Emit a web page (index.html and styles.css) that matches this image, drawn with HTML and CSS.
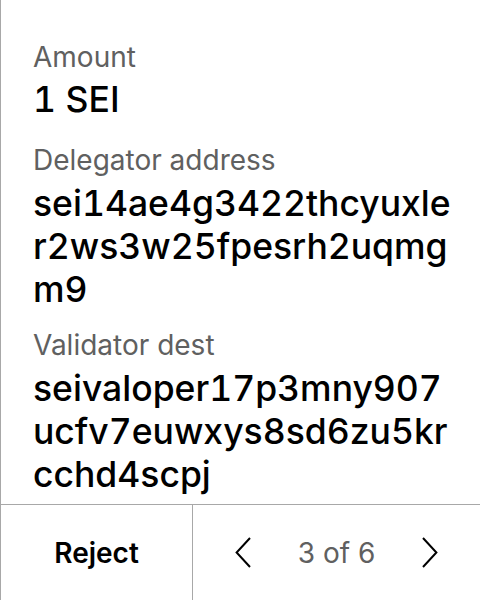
FILE: index.html
```html
<!DOCTYPE html>
<html lang="en">
<head>
<meta charset="utf-8">
<title>Review transaction</title>
<link rel="stylesheet" href="styles.css">
</head>
<body>
<div class="screen">
  <main class="content">
    <section class="field field-amount">
      <div class="label">Amount</div>
      <div class="value">1 SEI</div>
    </section>
    <section class="field field-delegator">
      <div class="label">Delegator address</div>
      <div class="value">sei14ae4g3422thcyuxle<br>r2ws3w25fpesrh2uqmg<br>m9</div>
    </section>
    <section class="field">
      <div class="label">Validator dest</div>
      <div class="value">seivaloper17p3mny907<br>ucfv7euwxys8sd6zu5kr<br>cchd4scpj</div>
    </section>
  </main>
  <footer class="footer">
    <div class="reject">Reject</div>
    <div class="pager">
      <svg class="chev" width="16" height="31" viewBox="0 0 16 31"><path d="M15 1 L1.6 15.5 L15 30" fill="none" stroke="#000" stroke-width="2"/></svg>
      <span class="count">3 of 6</span>
      <svg class="chev" width="16" height="31" viewBox="0 0 16 31"><path d="M1 1 L14.4 15.5 L1 30" fill="none" stroke="#000" stroke-width="2"/></svg>
    </div>
  </footer>
</div>
</body>
</html>
```
FILE: styles.css
```css
html, body {
  margin: 0;
  padding: 0;
  background: #fff;
}
body {
  font-family: Inter, "Liberation Sans", sans-serif;
  color: #000;
}
.screen {
  width: 480px;
  height: 600px;
  box-sizing: border-box;
  border-left: 1px solid #a8a8a8;
  display: flex;
  flex-direction: column;
}
.content {
  flex: 1;
  padding: 40px 10px 0 32px;
  display: flex;
  flex-direction: column;
}
.field-amount {
  margin-bottom: 22px;
}
.field-delegator {
  margin-bottom: 17px;
}
.label {
  font-size: 28px;
  line-height: 34px;
  color: #606060;
  margin-bottom: 5px;
}
.field-amount .label {
  margin-bottom: 4px;
}
.value {
  font-size: 35.5px;
  line-height: 43px;
  font-weight: 500;
  font-variant-numeric: tabular-nums;
  color: #000;
}
.footer {
  height: 96px;
  box-sizing: border-box;
  border-top: 1px solid #a8a8a8;
  display: grid;
  grid-template-columns: 192px 1fr;
}
.reject {
  display: flex;
  align-items: center;
  justify-content: center;
  font-size: 28px;
  font-weight: 600;
  border-right: 1px solid #a8a8a8;
}
.pager {
  display: flex;
  align-items: center;
  justify-content: space-between;
  padding: 0 42px;
}
.count {
  font-size: 28px;
  color: #606060;
}
.chev {
  display: block;
  overflow: visible;
}
```
